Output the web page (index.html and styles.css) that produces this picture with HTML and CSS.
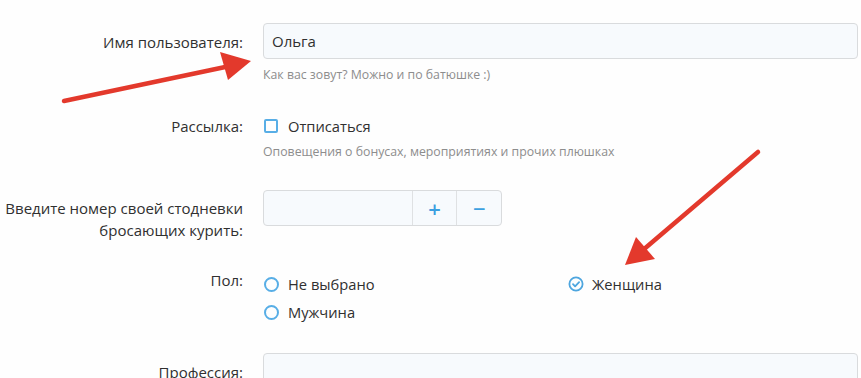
FILE: index.html
```html
<!DOCTYPE html>
<html lang="ru">
<head>
<meta charset="utf-8">
<link rel="stylesheet" href="styles.css">
</head>
<body>
<form class="form">
  <div class="row row-first">
    <div class="label label-input">Имя пользователя:</div>
    <div class="control">
      <div class="input"><span class="value">Ольга</span></div>
      <div class="hint">Как вас зовут? Можно и по батюшке :)</div>
    </div>
  </div>

  <div class="row row-mail">
    <div class="label">Рассылка:</div>
    <div class="control">
      <div class="option"><span class="checkbox"></span><span>Отписаться</span></div>
      <div class="hint">Оповещения о бонусах, мероприятиях и прочих плюшках</div>
    </div>
  </div>

  <div class="row row-spin">
    <div class="label label-input">Введите номер своей стодневки<br>бросающих курить:</div>
    <div class="control">
      <div class="spin">
        <div class="spin-field"></div>
        <div class="spin-btn">+</div>
        <div class="spin-btn">−</div>
      </div>
    </div>
  </div>

  <div class="row row-sex">
    <div class="label">Пол:</div>
    <div class="control radios">
      <div class="option radio-opt"><span class="radio"></span><span>Не выбрано</span></div>
      <div class="option radio-opt"><svg class="checked" viewBox="0 0 16 16" width="16" height="16"><circle cx="8" cy="8" r="6.6" fill="none" stroke="#4ea6df" stroke-width="1.8"/><path d="M5 8.2l2.1 2.1 4-4.1" fill="none" stroke="#4ea6df" stroke-width="1.8" stroke-linecap="round" stroke-linejoin="round"/></svg><span>Женщина</span></div>
      <div class="option radio-opt"><span class="radio"></span><span>Мужчина</span></div>
    </div>
  </div>

  <div class="row row-prof">
    <div class="label label-input">Профессия:</div>
    <div class="control">
      <div class="input"></div>
    </div>
  </div>
</form>

<svg class="arrows" width="861" height="378" viewBox="0 0 861 378">
  <line x1="64" y1="101" x2="230" y2="66" stroke="#e3392c" stroke-width="4.5" stroke-linecap="round"/>
  <polygon points="251,61 220,52 228,80" fill="#e3392c"/>
  <line x1="758" y1="152" x2="643" y2="250" stroke="#e3392c" stroke-width="4.5" stroke-linecap="round"/>
  <polygon points="625,265 636,237 655,259" fill="#e3392c"/>
</svg>
</body>
</html>
```

FILE: styles.css
```css
html, body {
  margin: 0;
  padding: 0;
  background: #fefefe;
}
body {
  position: relative;
  width: 861px;
  height: 378px;
  overflow: hidden;
  font-family: "Open Sans", "Noto Sans", sans-serif;
  font-size: 15px;
  color: #303030;
}
.form {
  display: flex;
  flex-direction: column;
  padding-right: 3px;
}
.row {
  display: grid;
  grid-template-columns: 243px 595px;
  column-gap: 20px;
  align-items: start;
}
.row-first { margin-top: 23px; }
.row-mail { margin-top: 33px; }
.row-spin { margin-top: 30px; }
.row-sex { margin-top: 29px; }
.row-prof { margin-top: 27px; }

.label {
  text-align: right;
  line-height: 20px;
  font-size: 15px;
}
.label-input { padding-top: 8px; line-height: 22px; }
.row-spin .label { padding-top: 7px; }

.input {
  box-sizing: border-box;
  height: 36px;
  border: 1px solid #d9dbdd;
  border-radius: 4px;
  background: #f7fafd;
  padding: 0 8px;
  display: flex;
  align-items: center;
  font-size: 15px;
}
.hint {
  margin-top: 8px;
  font-size: 12.3px;
  line-height: 16px;
  color: #8d8d8d;
}

.option {
  display: flex;
  align-items: center;
  height: 20px;
  font-size: 14.7px;
}
.checkbox {
  box-sizing: border-box;
  width: 14px;
  height: 14px;
  border: 2px solid #58aee6;
  border-radius: 2px;
  margin-left: 1px;
  margin-right: 10px;
}
.radios {
  display: grid;
  grid-template-columns: 1fr 1fr;
  column-gap: 15px;
  padding-top: 4px;
}
.radio-opt { height: 28px; margin-top: -4px; }
.radio-opt:nth-child(n+3) { margin-top: 0; }
.radio {
  box-sizing: border-box;
  width: 15px;
  height: 15px;
  border: 2px solid #58aee6;
  border-radius: 50%;
  margin-left: 1px;
  margin-right: 9px;
}
.checked {
  margin-left: 0;
  margin-right: 8px;
}

.spin {
  display: flex;
  width: 239px;
  height: 36px;
  box-sizing: border-box;
  border: 1px solid #d9dbdd;
  border-radius: 4px;
  background: #f7fafd;
}
.spin-field { width: 149px; }
.spin-btn {
  width: 44px;
  border-left: 1px solid #dfe1e3;
  display: flex;
  align-items: center;
  justify-content: center;
  color: #3d9fe0;
  font-size: 22px;
  font-weight: 600;
}

.arrows {
  position: absolute;
  left: 0;
  top: 0;
  pointer-events: none;
}
```
